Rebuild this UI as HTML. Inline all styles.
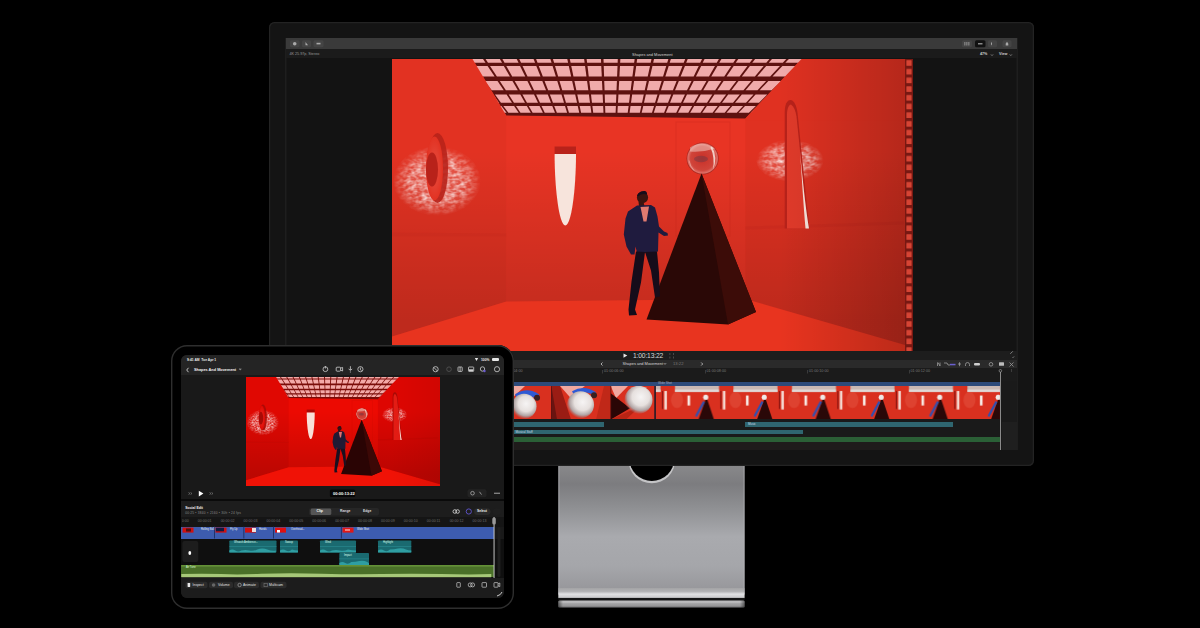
<!DOCTYPE html>
<html><head><meta charset="utf-8">
<style>
*{margin:0;padding:0;box-sizing:border-box}
html,body{width:1200px;height:628px;overflow:hidden;background:#000;font-family:"Liberation Sans",sans-serif}
.a{position:absolute}
.t{position:absolute;color:#cfcfcf;white-space:nowrap;line-height:1}
</style></head><body>
<svg width="0" height="0" style="position:absolute"><defs>
<symbol id="scene" viewBox="392 58.5 520 292.5" preserveAspectRatio="none">
  <rect x="392" y="58.5" width="520" height="292.5" fill="var(--back)"/>
  <polygon points="392,58.5 472.5,58.5 506.25,115 506.25,301 392,336" fill="var(--left)"/>
  <polygon points="392,336 506.25,301 745.4,298.5 912,346.5 912,351 392,351" fill="var(--floor)"/>
  <polygon points="801.5,58.5 912,58.5 912,346.5 745.4,298.5 745.4,118" fill="var(--right)"/>
  <polygon points="472.5,58.5 801.5,58.5 745.4,118 506.25,115" fill="var(--bar)"/>
  <g transform="translate(392,58.5)" fill="var(--tile)"><polygon points="-32.63,-6.5 -17.84,-6.5 -5.57,3.8 -19.59,3.8"/><polygon points="-15.21,-6.5 -0.42,-6.5 10.94,3.8 -3.07,3.8"/><polygon points="2.22,-6.5 17.0,-6.5 27.46,3.8 13.44,3.8"/><polygon points="19.64,-6.5 34.42,-6.5 43.97,3.8 29.96,3.8"/><polygon points="37.06,-6.5 51.85,-6.5 60.49,3.8 46.47,3.8"/><polygon points="54.48,-6.5 69.27,-6.5 77.0,3.8 62.99,3.8"/><polygon points="71.9,-6.5 86.69,-6.5 93.52,3.8 79.5,3.8"/><polygon points="89.33,-6.5 104.11,-6.5 110.04,3.8 96.02,3.8"/><polygon points="106.75,-6.5 121.53,-6.5 126.55,3.8 112.54,3.8"/><polygon points="124.17,-6.5 138.96,-6.5 143.07,3.8 129.05,3.8"/><polygon points="141.59,-6.5 156.38,-6.5 159.58,3.8 145.57,3.8"/><polygon points="159.01,-6.5 173.8,-6.5 176.1,3.8 162.08,3.8"/><polygon points="176.44,-6.5 191.22,-6.5 192.61,3.8 178.6,3.8"/><polygon points="193.86,-6.5 208.64,-6.5 209.13,3.8 195.11,3.8"/><polygon points="211.28,-6.5 226.06,-6.5 225.65,3.8 211.63,3.8"/><polygon points="228.7,-6.5 243.49,-6.5 242.16,3.8 228.14,3.8"/><polygon points="246.12,-6.5 260.91,-6.5 258.68,3.8 244.66,3.8"/><polygon points="263.55,-6.5 278.33,-6.5 275.19,3.8 261.18,3.8"/><polygon points="280.97,-6.5 295.75,-6.5 291.71,3.8 277.69,3.8"/><polygon points="298.39,-6.5 313.17,-6.5 308.22,3.8 294.21,3.8"/><polygon points="315.81,-6.5 330.6,-6.5 324.74,3.8 310.72,3.8"/><polygon points="333.23,-6.5 348.02,-6.5 341.25,3.8 327.24,3.8"/><polygon points="350.65,-6.5 365.44,-6.5 357.77,3.8 343.75,3.8"/><polygon points="368.08,-6.5 382.86,-6.5 374.29,3.8 360.27,3.8"/><polygon points="385.5,-6.5 400.28,-6.5 390.8,3.8 376.79,3.8"/><polygon points="402.92,-6.5 417.71,-6.5 407.32,3.8 393.3,3.8"/><polygon points="420.34,-6.5 435.13,-6.5 423.83,3.8 409.82,3.8"/><polygon points="437.76,-6.5 452.55,-6.5 440.35,3.8 426.33,3.8"/><polygon points="-15.67,6.9 -1.88,6.9 10.74,17.5 -2.25,17.5"/><polygon points="0.58,6.9 14.36,6.9 26.05,17.5 13.06,17.5"/><polygon points="16.82,6.9 30.6,6.9 41.37,17.5 28.37,17.5"/><polygon points="33.06,6.9 46.85,6.9 56.68,17.5 43.68,17.5"/><polygon points="49.31,6.9 63.09,6.9 71.99,17.5 58.99,17.5"/><polygon points="65.55,6.9 79.33,6.9 87.3,17.5 74.3,17.5"/><polygon points="81.79,6.9 95.58,6.9 102.61,17.5 89.61,17.5"/><polygon points="98.03,6.9 111.82,6.9 117.92,17.5 104.92,17.5"/><polygon points="114.28,6.9 128.06,6.9 133.23,17.5 120.23,17.5"/><polygon points="130.52,6.9 144.3,6.9 148.54,17.5 135.54,17.5"/><polygon points="146.76,6.9 160.55,6.9 163.85,17.5 150.85,17.5"/><polygon points="163.01,6.9 176.79,6.9 179.16,17.5 166.16,17.5"/><polygon points="179.25,6.9 193.03,6.9 194.47,17.5 181.47,17.5"/><polygon points="195.49,6.9 209.28,6.9 209.78,17.5 196.78,17.5"/><polygon points="211.73,6.9 225.52,6.9 225.09,17.5 212.09,17.5"/><polygon points="227.98,6.9 241.76,6.9 240.4,17.5 227.4,17.5"/><polygon points="244.22,6.9 258.0,6.9 255.71,17.5 242.71,17.5"/><polygon points="260.46,6.9 274.25,6.9 271.02,17.5 258.02,17.5"/><polygon points="276.71,6.9 290.49,6.9 286.33,17.5 273.33,17.5"/><polygon points="292.95,6.9 306.73,6.9 301.64,17.5 288.64,17.5"/><polygon points="309.19,6.9 322.98,6.9 316.95,17.5 303.96,17.5"/><polygon points="325.43,6.9 339.22,6.9 332.26,17.5 319.27,17.5"/><polygon points="341.68,6.9 355.46,6.9 347.57,17.5 334.58,17.5"/><polygon points="357.92,6.9 371.7,6.9 362.88,17.5 349.89,17.5"/><polygon points="374.16,6.9 387.95,6.9 378.19,17.5 365.2,17.5"/><polygon points="390.41,6.9 404.19,6.9 393.5,17.5 380.51,17.5"/><polygon points="406.65,6.9 420.43,6.9 408.81,17.5 395.82,17.5"/><polygon points="422.89,6.9 436.68,6.9 424.12,17.5 411.13,17.5"/><polygon points="3.32,21.9 15.99,21.9 27.12,31.25 15.16,31.25"/><polygon points="18.24,21.9 30.91,21.9 41.22,31.25 29.26,31.25"/><polygon points="33.17,21.9 45.83,21.9 55.32,31.25 43.36,31.25"/><polygon points="48.09,21.9 60.75,21.9 69.42,31.25 57.46,31.25"/><polygon points="63.01,21.9 75.68,21.9 83.52,31.25 71.56,31.25"/><polygon points="77.94,21.9 90.6,21.9 97.62,31.25 85.66,31.25"/><polygon points="92.86,21.9 105.52,21.9 111.72,31.25 99.76,31.25"/><polygon points="107.78,21.9 120.45,21.9 125.82,31.25 113.86,31.25"/><polygon points="122.71,21.9 135.37,21.9 139.93,31.25 127.96,31.25"/><polygon points="137.63,21.9 150.29,21.9 154.03,31.25 142.06,31.25"/><polygon points="152.55,21.9 165.22,21.9 168.13,31.25 156.16,31.25"/><polygon points="167.47,21.9 180.14,21.9 182.23,31.25 170.26,31.25"/><polygon points="182.4,21.9 195.06,21.9 196.33,31.25 184.36,31.25"/><polygon points="197.32,21.9 209.98,21.9 210.43,31.25 198.46,31.25"/><polygon points="212.24,21.9 224.91,21.9 224.53,31.25 212.56,31.25"/><polygon points="227.17,21.9 239.83,21.9 238.63,31.25 226.66,31.25"/><polygon points="242.09,21.9 254.75,21.9 252.73,31.25 240.76,31.25"/><polygon points="257.01,21.9 269.68,21.9 266.83,31.25 254.86,31.25"/><polygon points="271.94,21.9 284.6,21.9 280.93,31.25 268.96,31.25"/><polygon points="286.86,21.9 299.52,21.9 295.03,31.25 283.06,31.25"/><polygon points="301.78,21.9 314.45,21.9 309.13,31.25 297.16,31.25"/><polygon points="316.7,21.9 329.37,21.9 323.23,31.25 311.26,31.25"/><polygon points="331.63,21.9 344.29,21.9 337.33,31.25 325.36,31.25"/><polygon points="346.55,21.9 359.22,21.9 351.43,31.25 339.46,31.25"/><polygon points="361.47,21.9 374.14,21.9 365.53,31.25 353.56,31.25"/><polygon points="376.4,21.9 389.06,21.9 379.63,31.25 367.66,31.25"/><polygon points="391.32,21.9 403.98,21.9 393.73,31.25 381.76,31.25"/><polygon points="406.24,21.9 418.91,21.9 407.83,31.25 395.86,31.25"/><polygon points="20.66,35.6 32.3,35.6 42.01,43.75 30.98,43.75"/><polygon points="34.38,35.6 46.02,35.6 55.01,43.75 43.98,43.75"/><polygon points="48.1,35.6 59.74,35.6 68.01,43.75 56.98,43.75"/><polygon points="61.82,35.6 73.46,35.6 81.01,43.75 69.98,43.75"/><polygon points="75.53,35.6 87.17,35.6 94.01,43.75 82.98,43.75"/><polygon points="89.25,35.6 100.89,35.6 107.01,43.75 95.98,43.75"/><polygon points="102.97,35.6 114.61,35.6 120.01,43.75 108.98,43.75"/><polygon points="116.69,35.6 128.33,35.6 133.01,43.75 121.98,43.75"/><polygon points="130.4,35.6 142.04,35.6 146.02,43.75 134.98,43.75"/><polygon points="144.12,35.6 155.76,35.6 159.02,43.75 147.98,43.75"/><polygon points="157.84,35.6 169.48,35.6 172.02,43.75 160.98,43.75"/><polygon points="171.56,35.6 183.2,35.6 185.02,43.75 173.98,43.75"/><polygon points="185.27,35.6 196.91,35.6 198.02,43.75 186.98,43.75"/><polygon points="198.99,35.6 210.63,35.6 211.02,43.75 199.98,43.75"/><polygon points="212.71,35.6 224.35,35.6 224.02,43.75 212.98,43.75"/><polygon points="226.43,35.6 238.07,35.6 237.02,43.75 225.99,43.75"/><polygon points="240.14,35.6 251.79,35.6 250.02,43.75 238.99,43.75"/><polygon points="253.86,35.6 265.5,35.6 263.02,43.75 251.99,43.75"/><polygon points="267.58,35.6 279.22,35.6 276.02,43.75 264.99,43.75"/><polygon points="281.3,35.6 292.94,35.6 289.02,43.75 277.99,43.75"/><polygon points="295.01,35.6 306.66,35.6 302.02,43.75 290.99,43.75"/><polygon points="308.73,35.6 320.37,35.6 315.02,43.75 303.99,43.75"/><polygon points="322.45,35.6 334.09,35.6 328.02,43.75 316.99,43.75"/><polygon points="336.17,35.6 347.81,35.6 341.02,43.75 329.99,43.75"/><polygon points="349.88,35.6 361.53,35.6 354.02,43.75 342.99,43.75"/><polygon points="363.6,35.6 375.24,35.6 367.02,43.75 355.99,43.75"/><polygon points="377.32,35.6 388.96,35.6 380.02,43.75 368.99,43.75"/><polygon points="391.04,35.6 402.68,35.6 393.02,43.75 381.99,43.75"/><polygon points="34.97,46.9 45.76,46.9 53.98,53.8 43.7,53.8"/><polygon points="47.69,46.9 58.49,46.9 66.1,53.8 55.82,53.8"/><polygon points="60.41,46.9 71.21,46.9 78.21,53.8 67.93,53.8"/><polygon points="73.14,46.9 83.93,46.9 90.33,53.8 80.05,53.8"/><polygon points="85.86,46.9 96.66,46.9 102.45,53.8 92.16,53.8"/><polygon points="98.58,46.9 109.38,46.9 114.56,53.8 104.28,53.8"/><polygon points="111.31,46.9 122.1,46.9 126.68,53.8 116.4,53.8"/><polygon points="124.03,46.9 134.83,46.9 138.8,53.8 128.51,53.8"/><polygon points="136.75,46.9 147.55,46.9 150.91,53.8 140.63,53.8"/><polygon points="149.48,46.9 160.27,46.9 163.03,53.8 152.75,53.8"/><polygon points="162.2,46.9 173.0,46.9 175.14,53.8 164.86,53.8"/><polygon points="174.92,46.9 185.72,46.9 187.26,53.8 176.98,53.8"/><polygon points="187.65,46.9 198.44,46.9 199.38,53.8 189.09,53.8"/><polygon points="200.37,46.9 211.17,46.9 211.49,53.8 201.21,53.8"/><polygon points="213.09,46.9 223.89,46.9 223.61,53.8 213.33,53.8"/><polygon points="225.82,46.9 236.61,46.9 235.72,53.8 225.44,53.8"/><polygon points="238.54,46.9 249.34,46.9 247.84,53.8 237.56,53.8"/><polygon points="251.26,46.9 262.06,46.9 259.96,53.8 249.67,53.8"/><polygon points="263.99,46.9 274.78,46.9 272.07,53.8 261.79,53.8"/><polygon points="276.71,46.9 287.51,46.9 284.19,53.8 273.91,53.8"/><polygon points="289.43,46.9 300.23,46.9 296.31,53.8 286.02,53.8"/><polygon points="302.15,46.9 312.95,46.9 308.42,53.8 298.14,53.8"/><polygon points="314.88,46.9 325.68,46.9 320.54,53.8 310.26,53.8"/><polygon points="327.6,46.9 338.4,46.9 332.65,53.8 322.37,53.8"/><polygon points="340.32,46.9 351.12,46.9 344.77,53.8 334.49,53.8"/><polygon points="353.05,46.9 363.85,46.9 356.89,53.8 346.6,53.8"/><polygon points="365.77,46.9 376.57,46.9 369.0,53.8 358.72,53.8"/><polygon points="378.49,46.9 389.29,46.9 381.12,53.8 370.84,53.8"/></g>
  <polygon points="392,58.5 472.5,58.5 506.25,115 506.25,116 392,116" fill="var(--left)"/>
  <polygon points="801.5,58.5 912,58.5 912,120 745.4,120 745.4,118" fill="var(--right)"/>
  <polygon points="392,58.5 506.25,115 506.25,301 392,336" fill="url(#shadeG)"/>
  <polygon points="506.25,115 745.4,118 745.4,298.5 506.25,301" fill="url(#shadeG)"/>
  <polygon points="745.4,118 801.5,58.5 912,58.5 912,346.5 745.4,298.5" fill="url(#shadeG)"/>
  <polygon points="392,232 506.25,233 506.25,236 392,236" fill="var(--ring)" opacity=".12"/>
  <polygon points="745.4,226 904,221 904,224 745.4,229" fill="var(--ring)" opacity=".18"/>
  <rect x="676" y="121.5" width="54" height="114" fill="none" stroke="var(--ring)" stroke-width="1" opacity=".25"/>
  <ellipse cx="437" cy="180.5" rx="44" ry="35" fill="url(#haloG)" opacity=".45"/>
  <ellipse cx="437" cy="180.5" rx="44" ry="35" fill="url(#haloG2)" filter="url(#mottle)"/>
  <ellipse cx="790" cy="160" rx="34" ry="21" fill="url(#haloG)" opacity=".4"/>
  <ellipse cx="790" cy="160" rx="34" ry="21" fill="url(#haloG2)" filter="url(#mottle)"/>
  <ellipse cx="437.5" cy="167.5" rx="10.5" ry="35" fill="var(--ring)" opacity=".9"/>
  <ellipse cx="434.5" cy="168" rx="8.5" ry="32" fill="var(--left)"/>
  <ellipse cx="434.5" cy="168" rx="8.5" ry="32" fill="url(#haloG)" opacity=".2"/>
  <ellipse cx="432" cy="169" rx="6" ry="17" fill="var(--ring)"/>
  <rect x="554.6" y="146" width="21.4" height="8" fill="var(--ring)"/>
  <path d="M554.6,153.6 L576,153.6 C576,188 571.5,225 565.3,225 C559.1,225 554.6,188 554.6,153.6 Z" fill="var(--win)"/>
  <path d="M784.7,228 L784.7,112 C784.7,104 787,99.4 790.5,99.4 C794,99.4 796.5,105 797.5,112 L809.4,228 Z" fill="var(--ring)"/>
  <path d="M787,228 L787,114 C787,108 789,104 791,104 C794,106 795.5,110 796.5,116 L808,228 Z" fill="var(--tall)"/>
  <path d="M800,150 C803,185 806,210 809,228 L805.5,228 C803.5,205 802,180 800,150Z" fill="var(--win)"/>
  <circle cx="702.6" cy="157.9" r="16" fill="url(#sphG)"/>
  <path d="M690,147 Q702,139 715,148 Q703,152 690,151Z" fill="var(--win)" opacity=".45"/>
  <ellipse cx="701" cy="158.5" rx="7" ry="3.2" fill="#5a3a4a" opacity=".4"/>
  <path d="M712,146 Q718,157 713,169 Q715,157 710.5,147Z" fill="var(--win)" opacity=".85"/>
  <path d="M689,160 Q690,166 694,170" stroke="var(--win)" stroke-width=".8" fill="none" opacity=".5"/>
  <polygon points="701.5,173 646.5,319 728,324 756,311.6" fill="var(--pyl)"/>
  <polygon points="701.5,173 728,324 756,311.6" fill="var(--pyr)"/>
  <circle cx="642.5" cy="197" r="5.6" fill="var(--skin)"/>
  <path d="M637,195 Q639,190 645,190.5 Q647.5,191.5 647,194 Q642,192.5 638,196Z" fill="var(--pants)"/>
  <polygon points="638.5,201 643.5,201 644.5,206 639,206" fill="var(--skin)"/>
  <polygon points="637,205 651,204.5 655,207 657.5,216 659,226 664,231 667.5,232.5 668,235 664,235.5 658.5,232 658,251 650,252.5 637,252 635.5,246 634.5,254 631,254 626.5,246 623.8,234 625.5,218 628,211" fill="var(--suit)"/>
  <polygon points="640.5,206.5 649,206 646.5,221 643.5,221" fill="var(--shirt)"/>
  <polygon points="636,251 645,251.5 641,282 635,309 637,314.5 629,315 628.5,309 631.5,281" fill="var(--pants)"/>
  <polygon points="645,251.5 657,251 659,272 660,296 655,297 651,270" fill="var(--pants)"/>
  <rect x="392" y="58.5" width="520" height="292.5" fill="url(#vigG)" style="opacity:var(--vig)"/>
</symbol>

<radialGradient id="haloG"><stop offset="0" stop-color="#fff" stop-opacity=".42"/><stop offset=".55" stop-color="#fff" stop-opacity=".34"/><stop offset="1" stop-color="#fff" stop-opacity="0"/></radialGradient>
<radialGradient id="sphG" cx=".5" cy=".5" r=".5"><stop offset="0" stop-color="#c83028"/><stop offset=".75" stop-color="#d0443a"/><stop offset=".92" stop-color="#e07068"/><stop offset="1" stop-color="#a02018"/></radialGradient>
<radialGradient id="haloG2"><stop offset="0" stop-color="#fff" stop-opacity="1"/><stop offset=".6" stop-color="#fff" stop-opacity=".9"/><stop offset="1" stop-color="#fff" stop-opacity="0"/></radialGradient>
<filter id="mottle" x="-10%" y="-10%" width="120%" height="120%" color-interpolation-filters="sRGB">
  <feTurbulence type="fractalNoise" baseFrequency="0.18 0.3" numOctaves="2" seed="7" result="n"/>
  <feColorMatrix in="n" type="matrix" values="0 0 0 0 1  0 0 0 0 1  0 0 0 0 1  0 0 0 1.45 -0.42" result="w"/>
  <feComposite in="w" in2="SourceGraphic" operator="in"/>
</filter>
<linearGradient id="shadeG" gradientUnits="userSpaceOnUse" x1="0" y1="150" x2="0" y2="320"><stop offset="0" stop-color="#000" stop-opacity="0"/><stop offset="1" stop-color="#000" stop-opacity=".16"/></linearGradient>
<linearGradient id="standHi" x1="0" y1="0" x2="0" y2="1"><stop offset="0" stop-color="#a3a3a5"/><stop offset=".35" stop-color="#b4b4b6"/><stop offset=".6" stop-color="#e2e2e4"/><stop offset=".85" stop-color="#d0d0d2"/><stop offset="1" stop-color="#a8a8aa"/></linearGradient>
<linearGradient id="standFoot" x1="0" y1="0" x2="0" y2="1"><stop offset="0" stop-color="#7a7a7c"/><stop offset=".2" stop-color="#c4c4c6"/><stop offset=".45" stop-color="#a4a4a6"/><stop offset=".8" stop-color="#929294"/><stop offset="1" stop-color="#4a4a4c"/></linearGradient>
<linearGradient id="standFootH" x1="0" y1="0" x2="1" y2="0"><stop offset="0" stop-color="#000" stop-opacity=".45"/><stop offset=".025" stop-color="#000" stop-opacity="0"/><stop offset=".975" stop-color="#000" stop-opacity="0"/><stop offset="1" stop-color="#000" stop-opacity=".45"/></linearGradient>
<linearGradient id="vigG" gradientUnits="userSpaceOnUse" x1="780" y1="0" x2="912" y2="0"><stop offset="0" stop-color="#000" stop-opacity="0"/><stop offset="1" stop-color="#000" stop-opacity=".2"/></linearGradient>
<linearGradient id="stand" x1="0" y1="0" x2="0" y2="1"><stop offset="0" stop-color="#88888a"/><stop offset=".14" stop-color="#7c7c7f"/><stop offset=".32" stop-color="#8e8f92"/><stop offset=".55" stop-color="#a9aaae"/><stop offset=".78" stop-color="#a5a6aa"/><stop offset=".95" stop-color="#98989c"/><stop offset="1" stop-color="#a0a0a3"/></linearGradient>
</defs></svg>

<!-- ===== STAND ===== -->
<svg class="a" style="left:0;top:0" width="1200" height="628">
  <rect x="558.3" y="466" width="186.3" height="128.5" fill="url(#stand)"/>
  <rect x="558.3" y="466" width="1.2" height="122" fill="#b8b8bb" opacity=".5"/><rect x="743.4" y="466" width="1.2" height="122" fill="#b8b8bb" opacity=".5"/>
  <rect x="558.3" y="588" width="186.3" height="10.2" fill="url(#standHi)"/>
  <rect x="558.3" y="598.2" width="186.3" height="2" fill="#161616"/>
  <rect x="558.3" y="600.2" width="186.3" height="7.5" rx="1.5" fill="url(#standFoot)"/>
  <rect x="558.3" y="600.2" width="186.3" height="7.5" rx="1.5" fill="url(#standFootH)"/>
  <circle cx="651.8" cy="459.8" r="23.5" fill="#c4c4c6"/><circle cx="651.8" cy="458.6" r="22.4" fill="#000"/>
</svg>

<!-- ===== MONITOR ===== -->
<div class="a" style="left:269px;top:22px;width:765px;height:444px;border-radius:5.5px;background:#141414;box-shadow:inset 0 0 0 1.2px #232323"></div>
<div class="a" style="left:285px;top:38px;width:732.5px;height:412px;background:#131313;box-shadow:inset 0 0 0 1.5px #1e1e1e"></div>
<div class="a" style="left:286px;top:38px;width:731px;height:11.3px;background:#3a3a3a"></div>
<div class="a" style="left:286px;top:49.3px;width:731px;height:9.2px;background:#1b1b1b"></div>

<svg class="a" style="left:392px;top:58.5px;--back:#e83424;--left:#e23222;--floor:#e8341f;--right:#e03121;--bar:#5e1210;--tile:#f0aaaa;--halo:#f2c8c0;--ring:#b8221a;--win:#f7e4dc;--tall:#e03a2a;--sph:#d8504a;--sphhi:#f4b0aa;--pyl:#2a0806;--pyr:#3c0c08;--skin:#3a1410;--suit:#1f1b3e;--shirt:#e07a70;--pants:#160c1a;--vig:1" width="520" height="292.5"><use href="#scene"/></svg>
<!-- film strip -->
<svg class="a" style="left:904.5px;top:58.5px" width="8" height="292.5">
 <defs><pattern id="sprk" patternUnits="userSpaceOnUse" x="0" y="0" width="8" height="8.7"><rect width="8" height="8.7" fill="#781812"/><rect x="1.4" y="1.2" width="5.2" height="5.6" rx=".5" fill="#d64434"/></pattern></defs>
 <rect width="8" height="292.5" fill="url(#sprk)"/>
</svg>

<!-- monitor timeline -->
<div class="a" style="left:286px;top:351px;width:731px;height:9px;background:#1d1d1d"></div>
<div class="a" style="left:286px;top:360px;width:731px;height:8.3px;background:#2a2a2a"></div>
<div class="a" style="left:286px;top:368.3px;width:731px;height:13px;background:#1b1b1b"></div>
<div class="a" style="left:286px;top:381.3px;width:731px;height:68.7px;background:#1a1a1a"></div>
<div class="a" style="left:1000px;top:381.3px;width:17px;height:68.7px;background:#1a1a1a"></div><div class="a" style="left:1002px;top:421.5px;width:15px;height:28.5px;background:#1f1f1f"></div>
<div class="a" style="left:286px;top:442px;width:714px;height:8px;background:#1f1b1b"></div>
<div class="a" style="left:505px;top:382px;width:495px;height:3.7px;background:#2d4a7a"></div>
<svg class="a" style="left:505px;top:385.7px" width="495" height="33.6" viewBox="505 385.7 495 33.6">
  <defs>
   <radialGradient id="wsph" cx=".58" cy=".4" r=".62"><stop offset="0" stop-color="#f6f4f4"/><stop offset=".5" stop-color="#e6e0de"/><stop offset=".78" stop-color="#b0a4a4"/><stop offset="1" stop-color="#a08080" stop-opacity="0"/></radialGradient>
   <pattern id="fr" patternUnits="userSpaceOnUse" x="647" y="385.7" width="58.5" height="33.6">
     <rect x="0" y="0" width="58.5" height="33.6" fill="#d9301f"/>
     <rect x="28" y="0" width="44" height="6" fill="#c9b8b4"/>
     <rect x="28" y="3.5" width="44" height="2.5" fill="#e0d8d6"/>
     <rect x="-30.5" y="0" width="44" height="6" fill="#c9b8b4"/>
     <rect x="-30.5" y="3.5" width="44" height="2.5" fill="#e0d8d6"/>
     <rect x="17.3" y="5" width="2.6" height="18.5" fill="#f4d8d0"/>
     <rect x="40.5" y="9.5" width="2.6" height="10" fill="#f8ece6"/>
     <rect x="14.8" y="5" width="1.2" height="18" fill="#8a1410"/>
     <ellipse cx="30" cy="14" rx="6" ry="8" fill="#e04a38" opacity=".7"/>
     <polygon points="59.5,11 51.5,33.6 67,33.6" fill="#2a0808"/>
     <polygon points="59,12 52.5,33.6 0,33.6 0,30 " fill="#d9301f" opacity="0"/>
     <circle cx="58.7" cy="11.3" r="2.6" fill="#f0e8e6"/>
     <polygon points="56,15 58,16 50,31 48,30" fill="#3050b0"/>
     <polygon points="1,11 -7,33.6 8.5,33.6" fill="#2a0808"/>
     <circle cx="0.2" cy="11.3" r="2.6" fill="#f0e8e6"/>
     <polygon points="-2.5,15 -0.5,16 -8.5,31 -10.5,30" fill="#3050b0"/>
   </pattern>
  </defs>
  <rect x="505" y="385.7" width="495" height="33.6" fill="#d9301f"/>
  <polygon points="505,385.7 525,385.7 514,396" fill="#f0a8a0"/>
  <path d="M515,394 Q527,386 539,394 L537,399 Q527,392 517,399Z" fill="#2f5ad4"/>
  <circle cx="537" cy="397.5" r="3" fill="#3a2020"/>
  <circle cx="524" cy="406" r="12.5" fill="url(#wsph)"/>
  <polygon points="551.3,385.7 560,385.7 571,419.3 551.3,419.3" fill="#9a1c14"/>
  <polygon points="551.3,385.7 551.3,419.3 557,419.3" fill="#6a1410"/>
  <polygon points="560,385.7 585,385.7 570,397" fill="#f0a8a0"/>
  <path d="M572,391 Q584,384 596,392 L594,395 Q584,389 574,395Z" fill="#2f5ad4"/>
  <circle cx="594" cy="395" r="3" fill="#3a2020"/>
  <circle cx="580.5" cy="404.5" r="13.5" fill="url(#wsph)"/>
  <polygon points="604,385.7 610.7,385.7 610.7,419.3 596,419.3" fill="#c02818"/>
  <polygon points="610.7,385.7 628,385.7 616,398" fill="#f0a8a0"/>
  <polygon points="610.7,393 630,408 610.7,419.3" fill="#2a0606"/>
  <polygon points="610.7,419.3 640,406 626,419.3" fill="#b82414"/>
  <circle cx="638.5" cy="399.5" r="14" fill="url(#wsph)"/>
  <rect x="551" y="385.7" width="0.7" height="33.6" fill="#501010"/>
  <rect x="610.5" y="385.7" width="0.7" height="33.6" fill="#501010"/>
  <rect x="654.3" y="385.7" width="1.6" height="33.6" fill="#1a1a2a"/>
  <rect x="655.9" y="385.7" width="344.1" height="33.6" fill="url(#fr)"/>
</svg>
<div class="a" style="left:505px;top:422px;width:99px;height:5px;background:#2f6670"></div>
<div class="a" style="left:745px;top:422px;width:208px;height:5px;background:#2f6670"></div>
<div class="a" style="left:505px;top:429.8px;width:298px;height:4.7px;background:#2f6670"></div>
<div class="a" style="left:505px;top:436.8px;width:495px;height:5.2px;background:#2b5f36"></div>
<div class="a" style="left:999.8px;top:372px;width:.9px;height:78px;background:#8a8a8a"></div>
<div class="t" style="left:633px;top:352.6px;font-size:6.7px;color:#d8d8d8;letter-spacing:-.15px">1:00:13:22</div>
<div class="t" style="left:622.5px;top:362.2px;font-size:3.95px;color:#d8d8d8">Shapes and Movement</div>
<div class="t" style="left:673px;top:362px;font-size:4.2px;color:#777">13:22</div>
<div class="t" style="left:289.5px;top:53.1px;font-size:3.7px;color:#9a9a9a">4K 25.97p, Stereo</div>
<div class="t" style="left:632px;top:53.1px;font-size:3.95px;color:#d0d0d0">Shapes and Movement</div>
<div class="t" style="left:980px;top:53.1px;font-size:3.7px;color:#cfcfcf;font-weight:bold">47%</div>
<div class="t" style="left:999px;top:53.1px;font-size:3.7px;color:#cfcfcf;font-weight:bold">View</div>
<div class="t" style="left:604px;top:370.3px;font-size:3.7px;color:#7a7a7a">01:00:06:00</div>
<div class="t" style="left:706.5px;top:370.3px;font-size:3.7px;color:#7a7a7a">01:00:08:00</div>
<div class="t" style="left:809px;top:370.3px;font-size:3.7px;color:#7a7a7a">01:00:10:00</div>
<div class="t" style="left:910.5px;top:370.3px;font-size:3.7px;color:#7a7a7a">01:00:12:00</div>
<div class="t" style="left:503px;top:370.3px;font-size:3.7px;color:#7a7a7a">01:00:04:00</div>
<div class="t" style="left:658px;top:382.3px;font-size:3px;color:#aab">Wide Shot</div>
<div class="t" style="left:748px;top:422.8px;font-size:3px;color:#cde">Music</div>
<div class="t" style="left:515.5px;top:430.5px;font-size:3px;color:#cde">Musical Stuff</div>
<svg class="a" style="left:0;top:0" width="1200" height="628">
 <path d="M623.5,353.4 L627.3,355.6 L623.5,357.8Z" fill="#e8e8e8"/>
 <g fill="none" stroke="#cfcfcf" stroke-width=".6"><path d="M991,54.5 l1,1 l1,-1"/><path d="M1009.8,54.5 l1,1 l1,-1"/></g>
 <g fill="#555"><rect x="669.5" y="353" width=".8" height="2"/><rect x="673" y="353" width=".8" height="2"/><rect x="669.5" y="356.5" width=".8" height="2"/><rect x="673" y="356.5" width=".8" height="2"/></g>
 <g fill="none" stroke="#cfcfcf" stroke-width=".8"><path d="M602.5,362.5 l-1.5,1.5 l1.5,1.5"/><path d="M701.2,362.5 l1.5,1.5 l-1.5,1.5"/><path d="M664,363.3 l1,1 l1,-1"/></g>
 <g fill="#5a5a5a"><rect x="602.5" y="370" width=".5" height="3.5"/><rect x="705" y="370" width=".5" height="3.5"/><rect x="807.5" y="370" width=".5" height="3.5"/><rect x="909" y="370" width=".5" height="3.5"/></g>
 <!-- monitor toolbar buttons -->
 <g fill="#444"><rect x="290" y="40.2" width="9.5" height="7" rx="1.5"/><rect x="302" y="40.2" width="9" height="7" rx="1.5"/><rect x="313.5" y="40.2" width="10" height="7" rx="1.5"/>
  <rect x="962" y="40.2" width="10" height="7" rx="1.5"/><rect x="988" y="40.2" width="9" height="7" rx="1.5"/><rect x="1002.5" y="40.2" width="9" height="7" rx="1.5"/></g>
 <rect x="975" y="40.2" width="10.5" height="7" rx="1.5" fill="#111"/>
 <g fill="#aaa"><circle cx="294.7" cy="43.7" r="1.8"/><path d="M305.5,42 l2.5,3.2 h-2.5Z"/><rect x="316.5" y="42.8" width="4" height="1.6"/>
  <rect x="964.5" y="42" width=".8" height="3.5"/><rect x="966.5" y="42" width=".8" height="3.5"/><rect x="968.5" y="42" width=".8" height="3.5"/>
  <rect x="978" y="43" width="4.5" height="1.5" fill="#888"/><path d="M991,42 a2,2 0 0 1 0,3.5Z"/><path d="M1007,41.8 l1.3,2 v1.8 h-2.6 v-1.8Z"/></g>
 <!-- monitor timeline right icons -->
 <g fill="none" stroke="#aaa" stroke-width=".7">
  <path d="M937.5,362.5 v3.5 M940,362.5 v3.5 M938,362.5 l2,3.5"/>
  <path d="M944,363 h3 l1,2 h2"/>
  <path d="M959.5,362.2 v4 M958,364 h3"/>
  <path d="M965.5,366 v-1.5 a2,2 0 0 1 4,0 v1.5"/>
  <circle cx="991" cy="364.3" r="1.8"/>
  <path d="M1009.5,362.5 l2,2 l-2,2 M1013.5,362.5 l-2,2 l2,2"/>
  <path d="M1010.3,353.8 l2.5,-2.5 M1014,356.5 l-1.5,1.5"/>
 </g>
 <rect x="950" y="363.8" width="5.5" height="1.5" fill="#6a60d0"/>
 <rect x="974" y="363" width="6" height="2.5" rx="1" fill="#cfcfcf"/>
 <rect x="999" y="362.3" width="5" height="3.5" rx=".5" fill="#bbb"/>
 <circle cx="1000.4" cy="370.8" r="1.3" fill="none" stroke="#aaa" stroke-width=".6"/>
 <rect x="1011" y="369" width=".6" height="3" fill="#555"/>
</svg>

<!-- ===== iPAD ===== -->
<div class="a" style="left:171.3px;top:345px;width:343.2px;height:263.6px;border-radius:16px;background:#000;box-shadow:inset 0 0 0 1.4px #2e2e2e"></div>
<div class="a" style="left:181.3px;top:355.3px;width:323.2px;height:242.5px;border-radius:6px;background:#191919;overflow:hidden">
  <div class="a" style="left:0;top:0;width:100%;height:19.7px;background:#242424"></div>
</div>
<svg class="a" style="left:246.1px;top:376.7px;--back:#ec0a02;--left:#e00802;--floor:#f01206;--right:#de0602;--bar:#7a0c08;--tile:#f4aaa8;--halo:#f0b8b0;--ring:#a80a06;--win:#f8e0d8;--tall:#e41c14;--sph:#d84a44;--sphhi:#f4b0aa;--pyl:#2a0404;--pyr:#3c0806;--skin:#3a1010;--suit:#201a34;--shirt:#e07070;--pants:#1a1020;--vig:.3" width="194.2" height="108.9"><use href="#scene"/></svg>
<div class="a" style="left:181.3px;top:499px;width:323.2px;height:1.5px;background:#0a0a0a"></div>
<div class="a" style="left:181.3px;top:500.5px;width:323.2px;height:16.5px;background:#1d1d1d"></div>
<div class="a" style="left:181.3px;top:517px;width:323.2px;height:9.5px;background:#151515"></div>
<div class="a" style="left:181.3px;top:526.5px;width:312.7px;height:12px;background:#3d5caf"></div>
<div class="a" style="left:181.3px;top:538.5px;width:323.2px;height:39.5px;background:#0f0f0f"></div>
<div class="a" style="left:181.3px;top:565.2px;width:312.7px;height:12.1px;background:#4a7028"></div>
<div class="a" style="left:181.3px;top:578px;width:323.2px;height:19.8px;background:#1c1c1c;border-radius:0 0 6px 6px"></div>
<!-- iPad top bar -->
<div class="t" style="left:187px;top:358.9px;font-size:3.3px;color:#e8e8e8;font-weight:bold">9:41 AM&nbsp; Tue Apr 1</div>
<div class="t" style="left:481px;top:358.9px;font-size:3.3px;color:#e8e8e8;font-weight:bold">100%</div>
<div class="a" style="left:492px;top:357.8px;width:7px;height:3.6px;border-radius:1px;background:#e8e8e8"></div>
<div class="a" style="left:474.5px;top:357.6px;width:4px;height:3.5px;background:#e8e8e8;clip-path:polygon(0 0,100% 0,50% 100%)"></div>

<div class="t" style="left:194px;top:368.5px;font-size:3.85px;color:#eee;font-weight:bold">Shapes And Movement</div>
<div class="a" style="left:238.5px;top:368.2px;width:2.4px;height:2.4px;border-right:.6px solid #888;border-bottom:.6px solid #888;transform:rotate(45deg)"></div>
<svg class="a" style="left:0;top:0" width="1200" height="628">
 <path d="M188.5,367.8 l-1.8,2.2 l1.8,2.2" fill="none" stroke="#e8e8e8" stroke-width=".8"/>
 <g fill="none" stroke="#cfcfcf" stroke-width=".8">
  <circle cx="325.4" cy="369.2" r="2.4"/><path d="M325.4,366 v2.5"/>
  <rect x="336.2" y="367.2" width="4.4" height="4" rx=".8"/><path d="M340.6,368.2 l2,-.8 v3.6 l-2,-.8"/>
  <path d="M350.4,366.2 v4 M348.6,369 q1.8,2.5 3.6,0 M350.4,371.5 v1"/>
  <circle cx="360.4" cy="369.2" r="2.6"/><path d="M360.4,367.6 v2.2 l1.2,.8"/>
  <circle cx="435.6" cy="369.2" r="2.6"/><path d="M433.8,367.4 l3.6,3.6"/>
  <circle cx="449" cy="369.2" r="2.3" stroke="#555"/>
  <rect x="458" y="367" width="4.2" height="4.4" rx=".5"/><path d="M460.1,367 v4.4"/>
  <rect x="468.5" y="367" width="5.2" height="4.4" rx=".5"/>
  <circle cx="482.5" cy="369" r="2.2"/>
  <circle cx="497" cy="369.2" r="2.6"/>
 </g>
 <rect x="469" y="369.3" width="4.2" height="1.8" fill="#cfcfcf"/>
 <circle cx="484.5" cy="371" r="1.2" fill="#6a5ad0"/>
 <!-- play row -->
 <path d="M198.8,490.8 L203.4,493.6 L198.8,496.4Z" fill="#fff"/>
 <g fill="none" stroke="#888" stroke-width=".6"><path d="M188.5,492.5 l1.5,1 l-1.5,1 M190.5,492.5 l1.5,1 l-1.5,1"/><path d="M209.5,492.5 l1.5,1 l-1.5,1 M211.5,492.5 l1.5,1 l-1.5,1"/></g>
 <rect x="329.9" y="489.6" width="25.4" height="7.4" rx="1.5" fill="#070707"/>
 <rect x="467.5" y="489.2" width="19" height="8" rx="2" fill="#232323"/>
 <g fill="none" stroke="#bbb" stroke-width=".7"><circle cx="472.5" cy="493.2" r="1.8"/><path d="M479.5,491.8 l2,2.8"/></g>
 <g fill="#ddd"><circle cx="495" cy="493.3" r=".7"/><circle cx="497" cy="493.3" r=".7"/><circle cx="499" cy="493.3" r=".7"/></g>
 <!-- timeline header -->
 <rect x="309" y="508" width="70" height="7.6" rx="2" fill="#262626"/>
 <rect x="310.6" y="508.6" width="20.7" height="6.4" rx="1.6" fill="#555"/>
 <g fill="none" stroke="#ddd" stroke-width=".8"><circle cx="454.8" cy="511.5" r="1.8"/><circle cx="457.6" cy="511.5" r="1.8"/></g>
 <circle cx="468.8" cy="511.5" r="2.6" fill="none" stroke="#5a50c0" stroke-width="1"/>
 <rect x="474" y="508.2" width="16.5" height="6.8" rx="3.4" fill="#2a2a2a"/>
 <rect x="492.5" y="508.2" width="8.5" height="6.8" rx="3.4" fill="#1f1f1f"/>
 <!-- ruler ticks -->
 <g fill="#7a7a7a">
 </g>
</svg>
<div class="t" style="left:333px;top:491.5px;font-size:4px;color:#fff;font-weight:bold">00:00:13:22</div>
<div class="t" style="left:185.3px;top:506.8px;font-size:3.45px;color:#f0f0f0;font-weight:bold">Social Edit</div>
<div class="t" style="left:185.3px;top:512px;font-size:3.2px;color:#8a8a8a;letter-spacing:.2px">00:25 &bull; 3840 &times; 2160 &bull; 30fr &bull; 24 fps</div>
<div class="t" style="left:316.5px;top:510.2px;font-size:3.4px;color:#fff;font-weight:bold">Clip</div>
<div class="t" style="left:340px;top:510.2px;font-size:3.4px;color:#ddd;font-weight:bold">Range</div>
<div class="t" style="left:363px;top:510.2px;font-size:3.4px;color:#ddd;font-weight:bold">Edge</div>
<div class="t" style="left:477px;top:510.2px;font-size:3.4px;color:#eee;font-weight:bold">Select</div>
<div class="a" style="left:181.8px;top:517px;width:312px;height:9.5px;overflow:hidden"><div class="t" style="left:-6.95px;top:2.6px;font-size:3.55px;color:#707070">00:00:00</div><div class="t" style="left:15.95px;top:2.6px;font-size:3.55px;color:#707070">00:00:01</div><div class="t" style="left:38.85px;top:2.6px;font-size:3.55px;color:#707070">00:00:02</div><div class="t" style="left:61.75px;top:2.6px;font-size:3.55px;color:#707070">00:00:03</div><div class="t" style="left:84.65px;top:2.6px;font-size:3.55px;color:#707070">00:00:04</div><div class="t" style="left:107.55px;top:2.6px;font-size:3.55px;color:#707070">00:00:05</div><div class="t" style="left:130.45px;top:2.6px;font-size:3.55px;color:#707070">00:00:06</div><div class="t" style="left:153.35px;top:2.6px;font-size:3.55px;color:#707070">00:00:07</div><div class="t" style="left:176.25px;top:2.6px;font-size:3.55px;color:#707070">00:00:08</div><div class="t" style="left:199.15px;top:2.6px;font-size:3.55px;color:#707070">00:00:09</div><div class="t" style="left:222.05px;top:2.6px;font-size:3.55px;color:#707070">00:00:10</div><div class="t" style="left:244.95px;top:2.6px;font-size:3.55px;color:#707070">00:00:11</div><div class="t" style="left:267.85px;top:2.6px;font-size:3.55px;color:#707070">00:00:12</div><div class="t" style="left:290.75px;top:2.6px;font-size:3.55px;color:#707070">00:00:13</div></div>

<!-- iPad clips -->
<svg class="a" style="left:0;top:0" width="1200" height="628">
 <g fill="#1e2f66"><rect x="214" y="526.6" width=".9" height="11.9"/><rect x="243.4" y="526.6" width=".9" height="11.9"/><rect x="273.1" y="526.6" width=".9" height="11.9"/><rect x="340.9" y="526.6" width=".9" height="11.9"/></g>
 <g>
  <rect x="182.5" y="527.6" width="11" height="5" fill="#d01010"/><rect x="186" y="528.5" width="5" height="3" fill="#501010"/>
  <rect x="215.5" y="527.6" width="11" height="5" fill="#d01010"/><rect x="216" y="527.8" width="8" height="3.5" fill="#101a40"/>
  <rect x="245" y="527.6" width="11" height="5" fill="#d01010"/><rect x="252" y="528" width="4" height="4" fill="#f0e0e0"/>
  <rect x="275" y="527.6" width="11" height="5" fill="#e01010"/><rect x="277" y="530" width="3" height="2.5" fill="#fff"/>
  <rect x="342.5" y="527.6" width="11" height="5" fill="#e01818"/><rect x="345" y="529" width="5" height="2" fill="#f08080"/>
 </g>
 <!-- teal clips -->
 <g>
  <rect x="229.3" y="540.4" width="47.2" height="12.1" rx=".8" fill="#1a6a70"/>
  <rect x="280" y="540.4" width="18" height="12.1" rx=".8" fill="#1a6a70"/>
  <rect x="320" y="540.4" width="36" height="12.1" rx=".8" fill="#1a6a70"/>
  <rect x="378" y="540.4" width="33.3" height="12.1" rx=".8" fill="#1a6a70"/>
  <rect x="339.3" y="553" width="29.7" height="12" rx=".8" fill="#1a6a70"/>
 </g>
 <g fill="#2f9ea2">
  <path d="M229.3,552.5 v-2 q3,-2 6,0 t6,0 q4,-1 8,0 t8,-1 q5,-2 10,0 t8.5,1 v2Z"/>
  <path d="M280,552.5 v-2 q3,-2 6,0 t6,-1 q3,1 6,1 v2Z"/>
  <path d="M320,552.5 v-2 q3,-2 6,0 t6,0 q4,-1 8,0 t8,-1 q4,1 8,1 v2Z"/>
  <path d="M378,552.5 v-2 q3,-2 6,0 t6,-1 q4,0 8,-1 t8,1 q2,1 5.3,1 v2Z"/>
  <path d="M339.3,565 v-2 q3,-2 6,0 t6,-1 q4,0 8,-1 t8,1 q1,1 1.7,1 v2Z"/>
 </g>
 <g fill="#2b8c92"><rect x="229.3" y="546" width="47.2" height=".6"/><rect x="280" y="546" width="18" height=".6"/><rect x="320" y="546" width="36" height=".6"/><rect x="378" y="546" width="33.3" height=".6"/><rect x="339.3" y="558.6" width="29.7" height=".6"/></g>
 <!-- mic box -->
 <rect x="182.4" y="541" width="15.9" height="21" rx="2" fill="#1d1d1d"/>
 <ellipse cx="189.8" cy="553" rx="1.4" ry="2" fill="#fff"/>
 <!-- audio -->
 <path d="M181.3,577.3 v-3.2 q20,-.8 40,0 t40,-.4 q30,-.8 60,0 t60,.4 q30,-.8 60,0 t50,0 v3.2Z" fill="#a6c878"/>
 <rect x="181.3" y="566.5" width="312.7" height=".5" fill="#7aa050" opacity=".6"/>
 <rect x="181.3" y="565.2" width="312.7" height="1" fill="#6a9a3a"/>
 <!-- playhead -->
 <rect x="493.6" y="517" width=".9" height="61" fill="#d8d8d8"/>
 <rect x="492.3" y="517.5" width="3.5" height="7" rx="1.5" fill="#9a9a9a"/>
 <rect x="497.5" y="527" width="3" height="50" rx="1.5" fill="#1f1f1f"/>
 <!-- bottom toolbar -->
 <g fill="#2b2b2b"><rect x="185.5" y="581.8" width="22" height="6.5" rx="2"/><rect x="209" y="581.8" width="24" height="6.5" rx="2"/><rect x="234" y="581.8" width="25" height="6.5" rx="2"/><rect x="260.5" y="581.8" width="26" height="6.5" rx="2"/></g>
 <rect x="187.6" y="583" width="2.6" height="4" rx=".4" fill="#e8e8e8"/>
 <circle cx="213.6" cy="585" r="1.8" fill="#666"/>
 <circle cx="239.6" cy="585" r="1.7" fill="none" stroke="#bbb" stroke-width=".6"/>
 <rect x="264" y="583.3" width="3.4" height="3.4" fill="none" stroke="#777" stroke-width=".6"/>
 <g fill="none" stroke="#cfcfcf" stroke-width=".7">
  <rect x="456.8" y="582.6" width="3.5" height="4.6" rx=".5"/>
  <circle cx="470.2" cy="584.9" r="2"/><circle cx="472.6" cy="584.9" r="2"/>
  <rect x="482" y="582.6" width="4.5" height="4.6" rx=".5"/>
  <rect x="494" y="582.6" width="4" height="4.6" rx=".5"/><path d="M498,584 l1.8,-1 v3.6 l-1.8,-1"/>
 </g>
 <path d="M497,596 q4,-1 5,-4" stroke="#ddd" stroke-width=".9" fill="none"/>
</svg>
<div class="t" style="left:192.5px;top:584px;font-size:3.5px;color:#e0e0e0">Inspect</div>
<div class="t" style="left:218px;top:584px;font-size:3.5px;color:#e0e0e0">Volume</div>
<div class="t" style="left:243px;top:584px;font-size:3.5px;color:#e0e0e0">Animate</div>
<div class="t" style="left:269px;top:584px;font-size:3.5px;color:#e0e0e0">Multicam</div>
<div class="t" style="left:201px;top:528.5px;font-size:2.6px;color:#eee">Rolling Ball</div>
<div class="t" style="left:230px;top:528.5px;font-size:2.6px;color:#eee">Fly Up</div>
<div class="t" style="left:259px;top:528.5px;font-size:2.6px;color:#eee">Hands</div>
<div class="t" style="left:291px;top:528.5px;font-size:2.6px;color:#eee">Overhead...</div>
<div class="t" style="left:357px;top:528.5px;font-size:2.6px;color:#eee">Wide Shot</div>
<div class="t" style="left:234px;top:542px;font-size:2.6px;color:#dfe">Whoosh Ambience...</div>
<div class="t" style="left:285px;top:542px;font-size:2.6px;color:#dfe">Swoop</div>
<div class="t" style="left:325px;top:542px;font-size:2.6px;color:#dfe">Wind</div>
<div class="t" style="left:383px;top:542px;font-size:2.6px;color:#dfe">Highlight</div>
<div class="t" style="left:344px;top:554.6px;font-size:2.6px;color:#dfe">Impact</div>
<div class="t" style="left:186px;top:567px;font-size:2.6px;color:#dfd">Air Tune</div>

</body></html>
